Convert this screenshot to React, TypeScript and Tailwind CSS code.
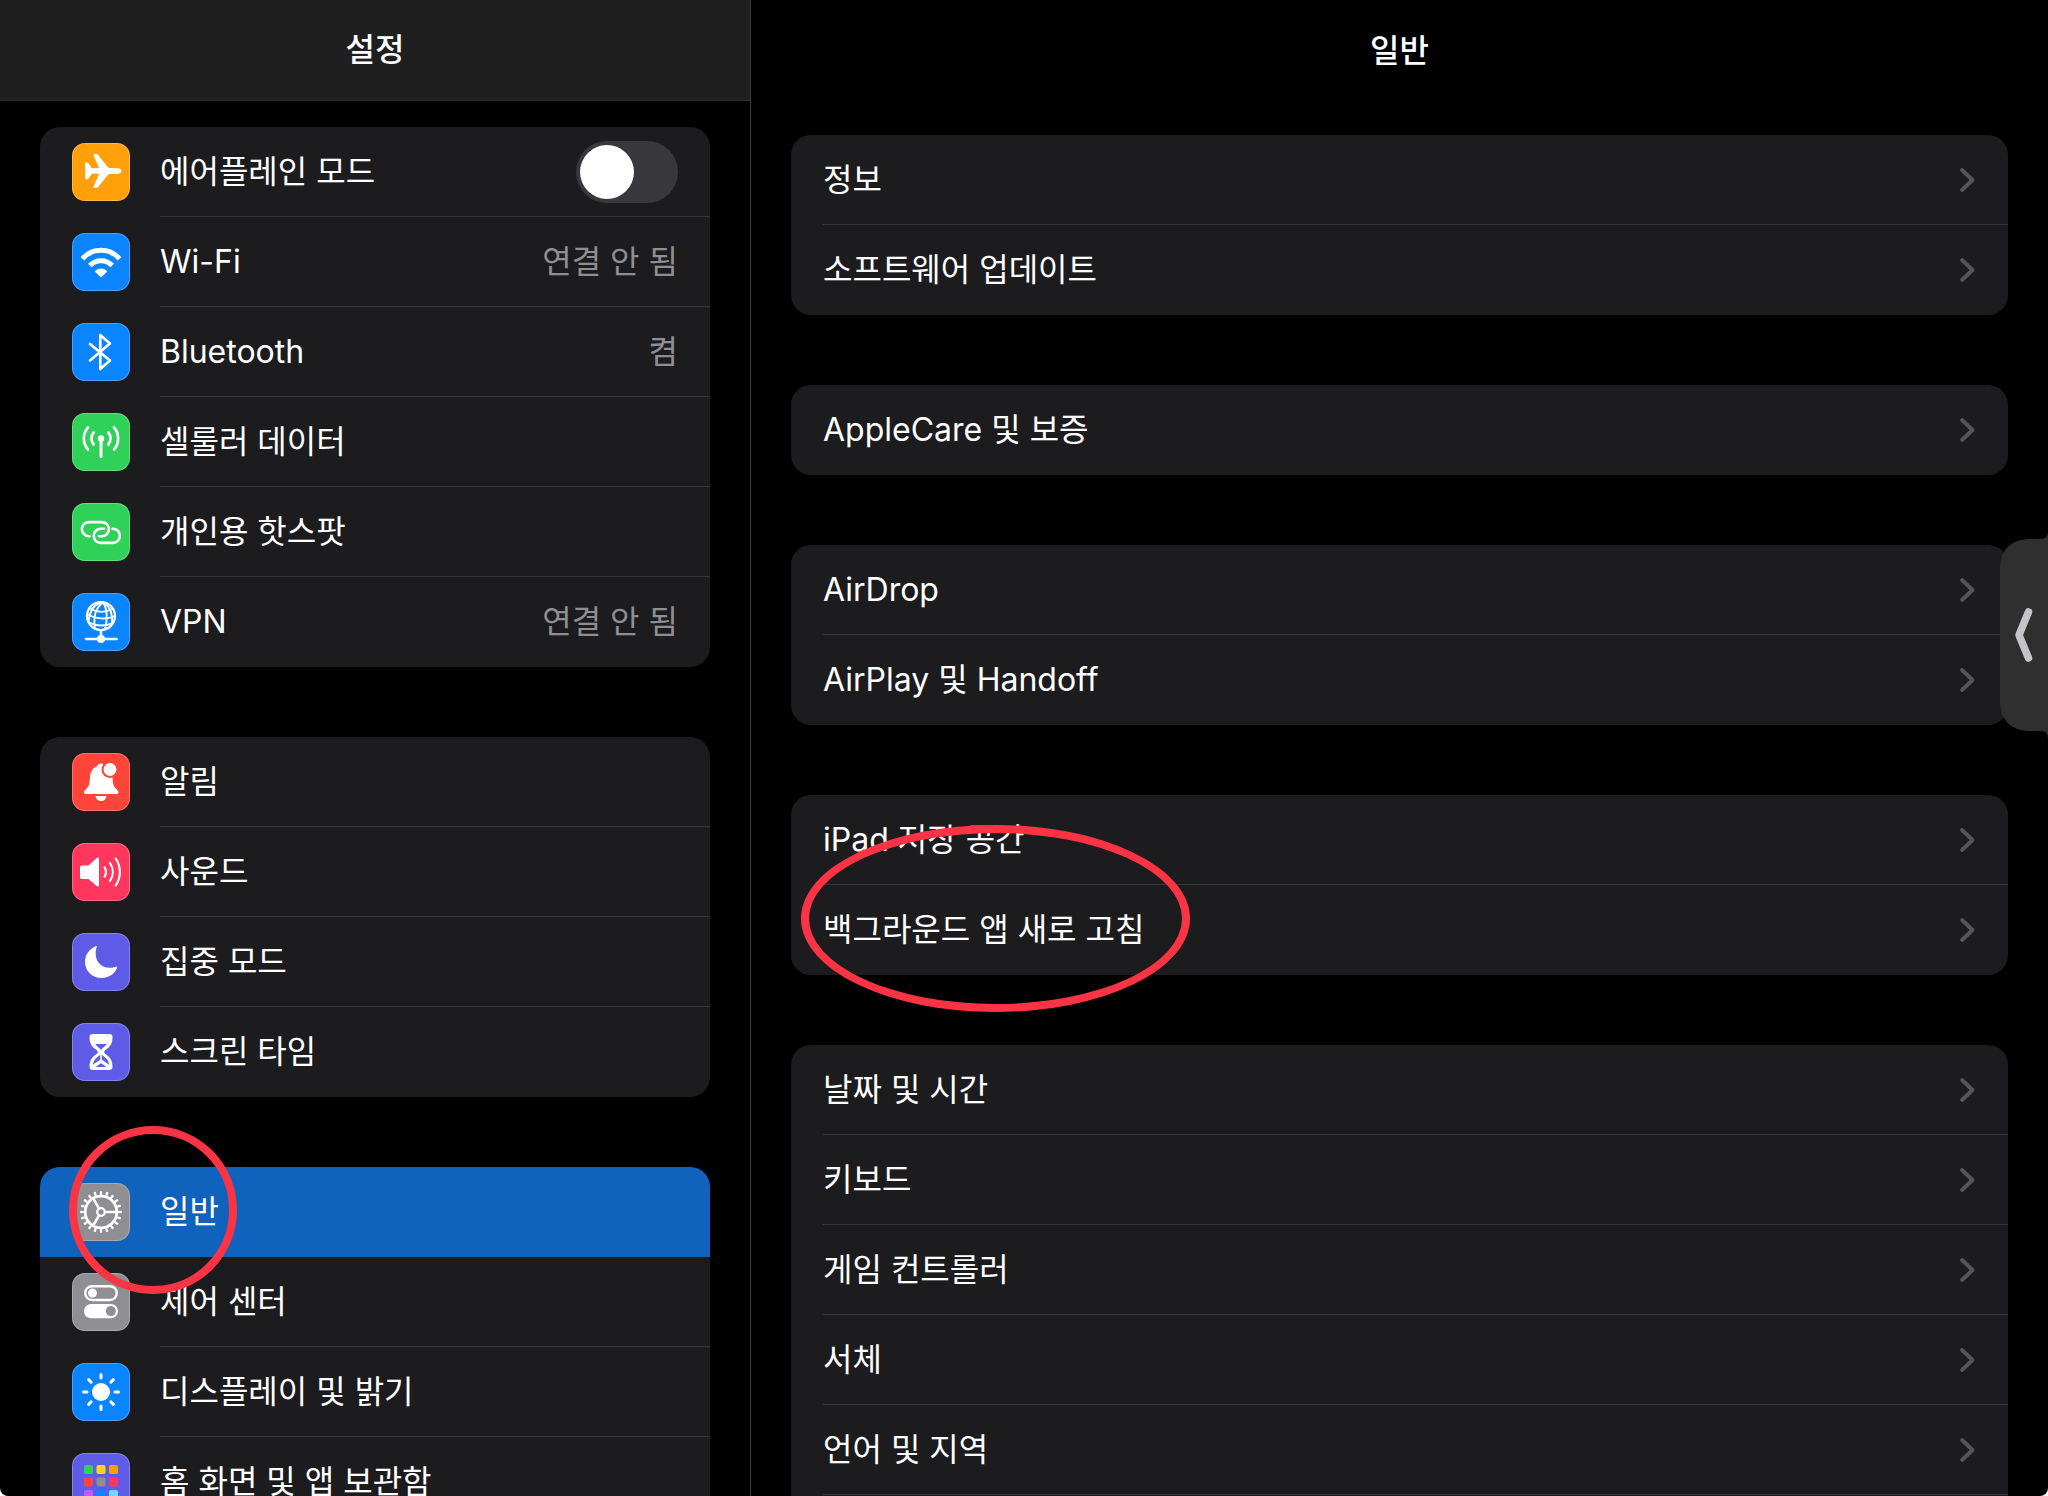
import { useState, type ReactNode } from "react";
import clsx from "clsx";

type SidebarItem = {
  label: string;
  tile: string;
  icon: ReactNode;
  value?: string;
  toggle?: boolean;
  selected?: boolean;
};

const line = {
  fill: "none",
  stroke: "#fff",
  strokeLinecap: "round",
  strokeLinejoin: "round",
} as const;

const airplane = (
  <path
    fill="#fff"
    d="M46 25.3c2 .2 3.4 1.4 3.4 2.7s-1.400 2.500-3.400 2.700l-8.500.3c-.6 0-1.100.3-1.500.8l-9.500 11.700c-.8 1-1.500 1.400-2.500 1.400h-1.800c-.7 0-1-.5-.7-1.200l5.200-12c.2-.5 0-.9-.5-.9l-5.500-.2c-.5 0-.9.2-1.200.6l-2.800 4c-.5.8-1 1.100-1.700 1.100h-.9c-.7 0-1-.4-1-1V20.700c0-.7.300-1.100 1-1.100h.9c.7 0 1.200.3 1.700 1l2.800 4.100c.3.4.7.6 1.200.6l5.500-.2c.5 0 .7-.4.5-.9l-5.200-12c-.3-.7 0-1.200.7-1.200h1.800c1 0 1.700.4 2.500 1.400L36 24.200c.4.5.9.8 1.500.8z"
  />
);

const wifi = (
  <>
    <g {...line} strokeLinecap="butt" strokeWidth="5">
      <path d="M10.500 25.800a24.500 24.500 0 0 1 37 0" />
      <path d="M17.800 32.600a15.500 15.500 0 0 1 22.400 0" />
    </g>
    <path fill="#fff" d="M23.300 37.800a8.400 8.400 0 0 1 11.400 0c.4.4.4.800 0 1.200l-5 4.700c-.4.4-1 .4-1.400 0l-5-4.700c-.4-.4-.4-.8 0-1.200z" />
  </>
);

const bluetooth = <path {...line} strokeWidth="2.600" d="M18 21l20 16.500L28.300 46V12L38 20.500 18 37.500" />;

const cellular = (
  <g {...line} strokeWidth="2.700">
    <path d="M29 26v17.500" strokeWidth="3" />
    <circle cx="29" cy="25.500" r="3.200" fill="#fff" stroke="none" />
    <path d="M21.700 19.500c-3 3.500-3 8.500 0 12M36.300 19.500c3 3.500 3 8.500 0 12M16 14.500c-5.500 6-5.500 16 0 22M42 14.500c5.500 6 5.500 16 0 22" />
  </g>
);

const hotspot = (
  <g {...line} strokeWidth="2.600">
    <path d="M17.500 33.300H17a7.100 7.100 0 0 1 0-14.200h12.800a7.100 7.100 0 0 1 0 14.200H27" />
    <path d="M32 25.700h-3.200a7.100 7.100 0 0 0 0 14.200h12a7.100 7.100 0 0 0 0-14.200h-.3" />
  </g>
);

const vpn = (
  <g {...line} strokeWidth="1.900">
    <circle cx="29" cy="23" r="14" strokeWidth="2.200" />
    <path d="M31.500 9.500c-7 4-10.500 13-8.500 26.500M31.500 9.500c3.500 6.500 4.500 15 1.500 26.500M31.500 9.500c5.500 3.500 9.500 10 8.500 21M31.500 9.500C24 10 18 15 16.500 29" />
    <path d="M18 15.500c7 4 15 4.500 22 .5M15.300 21c8 5 19 6 27.500 2M17 29.500c7 3.500 16 3.500 23 1" />
    <path d="M14 46h30.500" strokeWidth="2.600" />
    <path d="M29 38v6" strokeWidth="2.600" />
    <circle cx="29" cy="46" r="4" fill="#fff" stroke="none" />
  </g>
);

const bell = (
  <>
    <path
      fill="#fff"
      d="M29 10.500c2 0 3.500 1.200 4 2.800 4.500 1.700 7.300 5.700 7.500 11.200.3 6.500 1 8.500 3.500 11.300 1.300 1.500 2.500 2.400 2.500 3.700 0 1-.8 1.600-2 1.600H14c-1.200 0-2-.6-2-1.600 0-1.300 1.200-2.200 2.500-3.700 2.500-2.800 3.200-4.800 3.500-11.300.2-5.500 2.700-9.500 7-11.200.5-1.600 2-2.800 4-2.800z"
    />
    <path fill="#fff" d="M23.500 43h11c-.3 3-2.500 5-5.500 5s-5.200-2-5.500-5z" />
    <circle cx="38" cy="16.500" r="8.500" fill="#ff453a" />
    <circle cx="38" cy="16.500" r="6.400" fill="#fff" />
  </>
);

const speaker = (
  <>
    <path
      fill="#fff"
      d="M10 22.500h6.500L24.700 15c1.300-1 2.300-.5 2.300 1v26c0 1.500-1 2-2.300 1l-8.200-7H10c-1.300 0-2-.7-2-2v-9.500c0-1.300.7-2 2-2z"
    />
    <g {...line} strokeWidth="2.200">
      <path d="M32.700 24.500c1.700 3 1.700 6 0 9M38 20c3.700 5.500 3.700 12.500 0 18M43.700 15.500c5.500 8 5.500 19 0 27" />
    </g>
  </>
);

const moon = (
  <path
    fill="#fff"
    d="M23.700 13.200c.8-.4 1.400.1 1.100.9-.8 2-1.100 4-1.100 6.400 0 8.500 5.600 14.200 14 14.200 2.400 0 4.300-.3 6.200-1 .9-.3 1.600.2 1.200 1.100C42.700 41 36.700 45 29.500 45 20 45 13 38 13 28.800c0-7 4.200-13 10.700-15.600z"
  />
);

const hourglass = (
  <>
    <path
      fill="#fff"
      d="M20.500 11h17c2 0 3 1.200 3 3.200 0 6.800-2.500 9.300-6 12-1.700 1.300-2.300 1.900-2.300 2.800s.6 1.500 2.300 2.800c3.500 2.700 6 5.200 6 12 0 2-1 3.200-3 3.200h-17c-2 0-3-1.200-3-3.200 0-6.800 2.500-9.300 6-12 1.700-1.300 2.300-1.900 2.300-2.800s-.6-1.500-2.300-2.800c-3.500-2.700-6-5.200-6-12 0-2 1-3.200 3-3.200z"
    />
    <path fill="#5e5ce6" d="M23.300 21h11.400c-1 1.700-2.400 2.700-3.700 3.700-1 .8-1.500 1.500-2 2.500-.5-1-1-1.700-2-2.500-1.300-1-2.700-2-3.700-3.700z" />
    <path
      fill="#5e5ce6"
      d="M28.200 31.500v5.300c-2.700 1.700-5.300 3-7.200 5.200.3-3.500 1.500-5.700 4.500-8 1.200-.9 2-1.500 2.700-2.500zM29.800 31.500v5.300c2.700 1.700 5.300 3 7.200 5.200-.3-3.500-1.500-5.700-4.500-8-1.200-.9-2-1.500-2.700-2.500zM29 40.300l5.500 3.700h-11z"
    />
  </>
);

const gear = (
  <g fill="none" stroke="#fff">
    <circle cx="29" cy="29" r="15.800" strokeWidth="2.800" />
    <circle cx="29" cy="29" r="18.800" strokeWidth="4" pathLength="200" strokeDasharray="3.800 6.200" strokeDashoffset="1.900" />
    <circle cx="29" cy="29" r="3.800" strokeWidth="2.300" />
    <path strokeWidth="2.600" d="M33 29h12.500M27 25.500l-6.300-10.800M27 32.500l-6.300 10.800" />
  </g>
);

const controlCenter = (
  <>
    <rect x="13.200" y="13.200" width="31.600" height="13.800" rx="6.900" fill="none" stroke="#fff" strokeWidth="2.400" />
    <circle cx="20.500" cy="20.100" r="4.500" fill="#fff" />
    <rect x="12" y="31" width="34" height="14.300" rx="7.100" fill="#fff" />
    <circle cx="38.800" cy="38.100" r="5" fill="#8e8e93" />
  </>
);

const sun = (
  <>
    <circle cx="29" cy="29" r="9" fill="#fff" />
    <path
      {...line}
      strokeWidth="3"
      d="M29 11.500v3.500M29 43v3.500M11.500 29H15M43 29h3.500M16.600 16.600l2.500 2.500M38.900 38.900l2.500 2.500M16.600 41.400l2.500-2.500M38.900 19.100l2.500-2.500"
    />
  </>
);

const homeColors = [
  ["#30d158", "#ffd60a", "#ff9f0a"],
  ["#ff453a", "#8e8e93", "#ff375f"],
  ["#bf5af2", "#0a84ff", "#70d7ff"],
];

const homeScreen = homeColors.map((row, y) =>
  row.map((color, x) => (
    <rect key={color} x={12 + x * 12.5} y={12 + y * 12.5} width="9" height="9" rx="1.800" fill={color} />
  ))
);

const sidebarGroups: SidebarItem[][] = [
  [
    { label: "에어플레인 모드", tile: "bg-[#ff9f0a]", icon: airplane, toggle: true },
    { label: "Wi-Fi", tile: "bg-[#0a84ff]", icon: wifi, value: "연결 안 됨" },
    { label: "Bluetooth", tile: "bg-[#0a84ff]", icon: bluetooth, value: "켬" },
    { label: "셀룰러 데이터", tile: "bg-[#30d158]", icon: cellular },
    { label: "개인용 핫스팟", tile: "bg-[#30d158]", icon: hotspot },
    { label: "VPN", tile: "bg-[#0a84ff]", icon: vpn, value: "연결 안 됨" },
  ],
  [
    { label: "알림", tile: "bg-[#ff453a]", icon: bell },
    { label: "사운드", tile: "bg-[#ff375f]", icon: speaker },
    { label: "집중 모드", tile: "bg-[#5e5ce6]", icon: moon },
    { label: "스크린 타임", tile: "bg-[#5e5ce6]", icon: hourglass },
  ],
  [
    { label: "일반", tile: "bg-[#8e8e93]", icon: gear, selected: true },
    { label: "제어 센터", tile: "bg-[#8e8e93]", icon: controlCenter },
    { label: "디스플레이 및 밝기", tile: "bg-[#0a84ff]", icon: sun },
    { label: "홈 화면 및 앱 보관함", tile: "bg-[#5e5ce6]", icon: homeScreen },
  ],
];

const generalGroups = [
  ["정보", "소프트웨어 업데이트"],
  ["AppleCare 및 보증"],
  ["AirDrop", "AirPlay 및 Handoff"],
  ["iPad 저장 공간", "백그라운드 앱 새로 고침"],
  ["날짜 및 시간", "키보드", "게임 컨트롤러", "서체", "언어 및 지역"],
];

function Tile({ color, children }: { color: string; children: ReactNode }) {
  return (
    <span className={clsx("size-[58px] shrink-0 overflow-hidden rounded-[13px] inset-ring inset-ring-white/25", color)}>
      <svg viewBox="0 0 58 58" className="size-full" aria-hidden="true">
        {children}
      </svg>
    </span>
  );
}

function SidebarRow({ item, last }: { item: SidebarItem; last: boolean }) {
  const [on, setOn] = useState(false);
  const rowClass = clsx(
    "flex h-[90px] w-full items-center gap-[30px] pl-8 text-left",
    item.selected && "bg-[#0f63bc]"
  );
  const content = (
    <>
      <Tile color={item.tile}>{item.icon}</Tile>
      <span
        className={clsx(
          "flex h-full flex-1 items-center justify-between border-b pr-8",
          last || item.selected ? "border-transparent" : "border-[#38383a]"
        )}
      >
        <span>{item.label}</span>
        {item.value && <span className="text-[#8e8e93]">{item.value}</span>}
        {item.toggle && (
          <input
            type="checkbox"
            role="switch"
            checked={on}
            onChange={() => setOn(!on)}
            className="h-[62px] w-[102px] appearance-none rounded-full bg-[#39393d] p-1 before:block before:size-[54px] before:rounded-full before:bg-white checked:bg-[#30d158] checked:before:ml-10"
          />
        )}
      </span>
    </>
  );

  return (
    <li>
      {item.toggle ? (
        <label className={rowClass}>{content}</label>
      ) : (
        <a href="#" className={rowClass}>
          {content}
        </a>
      )}
    </li>
  );
}

export default function App() {
  return (
    <div className="h-screen bg-white">
      <div className="relative flex h-full overflow-hidden rounded-b-lg bg-black font-['Inter','Noto_Sans_CJK_KR',sans-serif] text-[32px] leading-10 text-white">
        <aside className="flex w-[751px] shrink-0 flex-col border-r border-[#38383a]">
          <header className="flex h-[101px] shrink-0 items-center justify-center border-b border-[#2c2c2e] bg-[#1f1f1f]">
            <h1 className="font-medium">설정</h1>
          </header>
          <nav className="flex min-h-0 flex-1 flex-col gap-[70px] overflow-hidden px-10 pt-[26px]">
            {sidebarGroups.map((group) => (
              <ul key={group[0].label} className="shrink-0 overflow-hidden rounded-[20px] bg-[#1c1c1e]">
                {group.map((item, i) => (
                  <SidebarRow key={item.label} item={item} last={i === group.length - 1} />
                ))}
              </ul>
            ))}
          </nav>
        </aside>

        <main className="flex min-w-0 flex-1 flex-col">
          <header className="flex h-[101px] shrink-0 items-center justify-center">
            <h2 className="font-medium">일반</h2>
          </header>
          <div className="flex min-h-0 flex-1 flex-col gap-[70px] overflow-hidden px-10 pt-[34px]">
            {generalGroups.map((group, g) => {
              // the last list carries on below the fold
              const open = g === generalGroups.length - 1;
              return (
                <ul
                  key={group[0]}
                  className={clsx("shrink-0 overflow-hidden bg-[#1c1c1e]", open ? "rounded-t-[20px] pb-5" : "rounded-[20px]")}
                >
                  {group.map((label, i) => (
                    <li key={label} className="pl-8">
                      <a
                        href="#"
                        className={clsx(
                          "flex h-[90px] items-center justify-between border-b pr-8",
                          open || i < group.length - 1 ? "border-[#38383a]" : "border-transparent"
                        )}
                      >
                        <span>{label}</span>
                        <svg viewBox="0 0 18 26" className="h-[26px] w-[18px]" aria-hidden="true">
                          <path d="M4 3l10.500 10L4 23" fill="none" stroke="#565659" strokeWidth="3.800" strokeLinecap="round" strokeLinejoin="round" />
                        </svg>
                      </a>
                    </li>
                  ))}
                </ul>
              );
            })}
          </div>
        </main>

        <button type="button" aria-label="열기" className="absolute top-[531px] right-0 h-[208px] w-12">
          <svg viewBox="0 0 48 208" className="size-full" aria-hidden="true">
            <path d="M48 0v208c0-5-2-8-7-8H31C11 200 0 190 0 168V40C0 18 11 8 31 8h10c5 0 7-3 7-8z" fill="#2f2f30" />
            <path d="M28.500 81L19 104l9.500 23" fill="none" stroke="#c3c3c8" strokeWidth="7.500" strokeLinecap="round" strokeLinejoin="round" />
          </svg>
        </button>

        {/* red pen marks */}
        <div className="pointer-events-none absolute top-[1126px] left-[69px] size-[168px] rounded-full border-8 border-[#fb3445]" />
        <div className="pointer-events-none absolute top-[825px] left-[801px] h-[187px] w-[389px] rounded-[50%] border-8 border-[#fb3445]" />
      </div>
    </div>
  );
}
